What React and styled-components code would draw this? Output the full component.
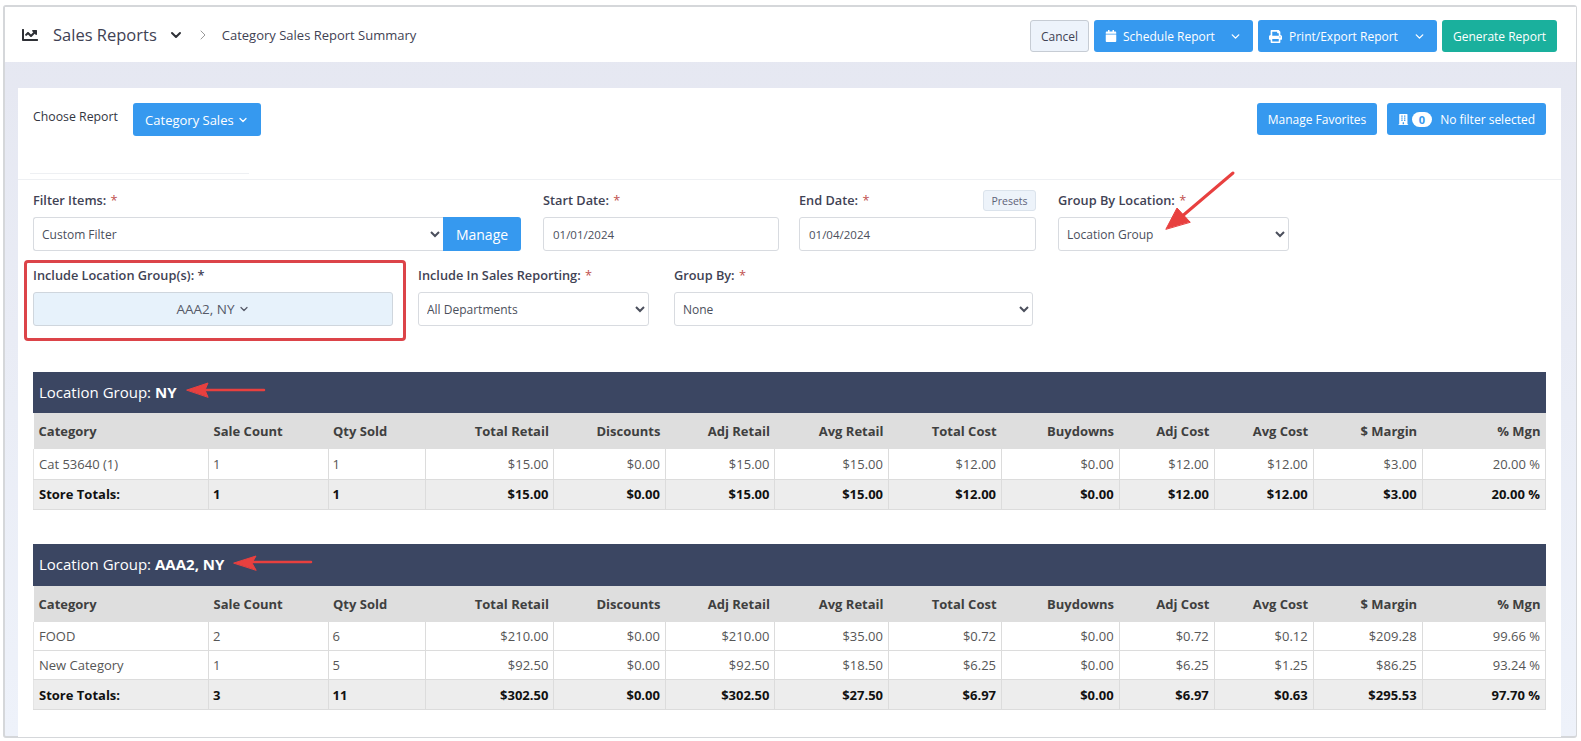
import React from "react";
import styled, { createGlobalStyle } from "styled-components";
import { FaChartLine, FaCalendar, FaPrint, FaBuilding } from "react-icons/fa";
import { ChevronDown, ChevronRight } from "lucide-react";

const GlobalStyle = createGlobalStyle`
  html, body { margin: 0; padding: 0; background: #fff; }
  body { font-family: "Open Sans", "Liberation Sans", sans-serif; color: #3f4254; overflow: hidden; }
  * { box-sizing: border-box; }
`;

const Page = styled.div`
  position: relative;
  width: 1581px;
  height: 741px;
  padding: 5px 4px 3px 3px;
`;

const Frame = styled.div`
  height: 733px;
  border: 2px solid #d5d7da;
  border-right-width: 1px;
  border-radius: 3px;
  display: flex;
  flex-direction: column;
  background: linear-gradient(#e5e7f1, #eef2fa);
`;

const Header = styled.header`
  height: 55px;
  flex: none;
  background: #fff;
  display: flex;
  align-items: center;
  justify-content: space-between;
  padding: 3px 19px 0 17px;
`;

const Crumbs = styled.div`
  display: flex;
  align-items: center;
  margin-top: -3px;
  color: #3f4254;
`;

const Title = styled.span`
  font-size: 16.5px;
  margin-left: 15px;
  margin-right: 11px;
`;

const Current = styled.span`
  font-size: 13px;
  margin-left: 11px;
`;

const Actions = styled.div`
  display: flex;
  gap: 5px;
`;

const Button = styled.button`
  height: ${(p) => p.$h || 32}px;
  width: ${(p) => p.$w}px;
  flex: none;
  border: none;
  border-radius: 3px;
  background: ${(p) => p.$bg || "#3699ef"};
  color: #fff;
  font: 400 ${(p) => p.$size || 12}px "Open Sans", sans-serif;
  display: flex;
  align-items: center;
  justify-content: ${(p) => p.$justify || "center"};
  gap: ${(p) => p.$gap ?? 6}px;
  padding: 0 ${(p) => p.$pad || 0}px;
  white-space: nowrap;
`;

const CancelButton = styled(Button)`
  background: #edf3fb;
  border: 1px solid #c6ccd4;
  color: #3f4254;
`;

const ButtonLabel = styled.span`
  flex: 1;
  text-align: left;
  margin-left: ${(p) => p.$ml || 0}px;
`;

const Main = styled.main`
  flex: 1;
  padding: 26px 15px 0 13px;
`;

const Card = styled.section`
  background: #fff;
  height: 649px;
`;

const TopBar = styled.div`
  height: 92px;
  border-bottom: 1px solid #eef0f3;
  padding: 15px 15px 0 15px;
  display: flex;
  justify-content: space-between;
  position: relative;
`;

const TopGroup = styled.div`
  display: flex;
  align-items: flex-start;
  gap: ${(p) => p.$gap}px;
`;

const ChooseLabel = styled.span`
  font-size: 12.3px;
  color: #33363f;
  margin-top: 5px;
`;

const ShortRule = styled.div`
  position: absolute;
  left: 12px;
  top: 85px;
  width: 219px;
  border-top: 1px solid #eef0f3;
`;

const Count = styled.span`
  background: #fff;
  color: #3699ef;
  border-radius: 9px;
  width: 21px;
  height: 15px;
  font-size: 11px;
  font-weight: 700;
  line-height: 15px;
  text-align: center;
  margin-left: -3px;
  margin-right: 2px;
`;

const FilterRow = styled.div`
  display: flex;
  height: ${(p) => p.$h}px;
  padding-left: 15px;
  padding-top: 6px;
`;

const Field = styled.div`
  width: ${(p) => p.$w}px;
  margin-right: ${(p) => p.$mr || 0}px;
  flex: none;
`;

const LabelRow = styled.div`
  height: 31px;
  padding-bottom: 3px;
  display: flex;
  align-items: center;
  justify-content: space-between;
`;

const Label = styled.label`
  font-size: 12.75px;
  font-weight: 600;
  color: #3f4254;
  white-space: nowrap;
  & b { color: #c0504d; font-weight: 400; margin-left: 1px; }
`;

const Presets = styled.span`
  width: 53px;
  height: 21px;
  align-self: flex-start;
  margin-top: 4px;
  border: 1px solid #dbe3ec;
  border-radius: 3px;
  background: #edf3fa;
  font-size: 10.5px;
  color: #5e6278;
  display: flex;
  align-items: center;
  justify-content: center;
`;

const inputCss = `
  width: 100%;
  height: 34px;
  border: 1px solid #d8dbe0;
  border-radius: 3px;
  background: #fff;
  font-family: "Open Sans", sans-serif;
  font-weight: 400;
  color: #4b4f5c;
`;

const Select = styled.select`
  ${inputCss}
  font-size: 12px;
  padding: 0 4px;
  ${(p) => p.$joined && "border-radius: 3px 0 0 3px; border-right: none;"}
`;

const Input = styled.input`
  ${inputCss}
  font-size: 11.5px;
  padding: 0 9px;
`;

const Joined = styled.div`
  display: flex;
`;

const ManageButton = styled(Button)`
  border-radius: 0 3px 3px 0;
`;

const MultiSelect = styled.div`
  height: 34px;
  border: 1px solid #cfd6dd;
  border-radius: 3px;
  background: #e7f2fb;
  font-size: 13.5px;
  color: #565a68;
  display: flex;
  align-items: center;
  justify-content: center;
  gap: 3px;
`;

const Report = styled.div`
  margin: ${(p) => p.$top}px 15px 0 15px;
`;

const GroupBar = styled.div`
  height: ${(p) => p.$h}px;
  background: #3b4662;
  color: #fff;
  font-size: 15px;
  display: flex;
  align-items: center;
  padding-left: 6px;
  padding-bottom: 2px;
  gap: 4px;
  & b { font-weight: 700; }
`;

const Table = styled.table`
  width: 100%;
  table-layout: fixed;
  border-collapse: collapse;
  font-size: 13px;
`;

const HeadCell = styled.th`
  height: 36px;
  background: #dedede;
  color: #3f4040;
  font-weight: 700;
  font-size: 13px;
  padding: 0 5px;
  text-align: ${(p) => (p.$left ? "left" : "right")};
`;

const Cell = styled.td`
  height: ${(p) => p.$h}px;
  padding: 0 5px 0 4px;
  border-right: 1px solid #dcdcdc;
  border-bottom: 1px solid #dcdcdc;
  color: #565656;
  font-weight: 400;
  text-align: ${(p) => (p.$left ? "left" : "right")};
  &:first-child { border-left: 1px solid #e4e4e4; padding-left: 5px; }
`;

const TotalCell = styled(Cell)`
  background: #ededed;
  color: #111;
  font-weight: 700;
`;

const Annotation = styled.svg`
  position: absolute;
  left: 0;
  top: 0;
  pointer-events: none;
`;

const HighlightBox = styled.div`
  position: absolute;
  left: 24px;
  top: 260px;
  width: 382px;
  height: 81px;
  border: 3px solid #dc4449;
  border-radius: 4px;
  pointer-events: none;
`;

const columns = [
  ["Category", 175, true],
  ["Sale Count", 119.4, true],
  ["Qty Sold", 97.6, true],
  ["Total Retail", 128.2],
  ["Discounts", 111.5],
  ["Adj Retail", 109.5],
  ["Avg Retail", 113.5],
  ["Total Cost", 113],
  ["Buydowns", 117.5],
  ["Adj Cost", 95.2],
  ["Avg Cost", 98.9],
  ["$ Margin", 108.9],
  ["% Mgn", 123.2],
];

const ny = {
  rowH: 30,
  rows: [["Cat 53640 (1)", "1", "1", "$15.00", "$0.00", "$15.00", "$15.00", "$12.00", "$0.00", "$12.00", "$12.00", "$3.00", "20.00 %"]],
  total: ["Store Totals:", "1", "1", "$15.00", "$0.00", "$15.00", "$15.00", "$12.00", "$0.00", "$12.00", "$12.00", "$3.00", "20.00 %"],
};

const aaa = {
  rowH: 29,
  rows: [
    ["FOOD", "2", "6", "$210.00", "$0.00", "$210.00", "$35.00", "$0.72", "$0.00", "$0.72", "$0.12", "$209.28", "99.66 %"],
    ["New Category", "1", "5", "$92.50", "$0.00", "$92.50", "$18.50", "$6.25", "$0.00", "$6.25", "$1.25", "$86.25", "93.24 %"],
  ],
  total: ["Store Totals:", "3", "11", "$302.50", "$0.00", "$302.50", "$27.50", "$6.97", "$0.00", "$6.97", "$0.63", "$295.53", "97.70 %"],
};

function ReportTable({ data }) {
  return (
    <Table>
      <colgroup>
        {columns.map(([name, width]) => (
          <col key={name} width={width} />
        ))}
      </colgroup>
      <thead>
        <tr>
          {columns.map(([name, , left]) => (
            <HeadCell key={name} $left={left}>{name}</HeadCell>
          ))}
        </tr>
      </thead>
      <tbody>
        {data.rows.map((row) => (
          <tr key={row[0]}>
            {row.map((value, i) => (
              <Cell key={i} $h={data.rowH} $left={i < 3}>{value}</Cell>
            ))}
          </tr>
        ))}
        <tr>
          {data.total.map((value, i) => (
            <TotalCell key={i} $h={30} $left={i < 3}>{value}</TotalCell>
          ))}
        </tr>
      </tbody>
    </Table>
  );
}

const Req = () => <b>*</b>;

export default function App() {
  return (
    <Page>
      <GlobalStyle />
      <Frame>
        <Header>
          <Crumbs>
            <FaChartLine size={16} color="#2e3036" />
            <Title>Sales Reports</Title>
            <ChevronDown size={16} strokeWidth={3} color="#2e3036" />
            <ChevronRight size={16} strokeWidth={1.5} color="#9a9a9a" style={{ marginLeft: 11 }} />
            <Current>Category Sales Report Summary</Current>
          </Crumbs>
          <Actions>
            <CancelButton $w={59}>Cancel</CancelButton>
            <Button $w={159} $pad={11} $justify="flex-start">
              <FaCalendar size={12} />
              <ButtonLabel>Schedule Report</ButtonLabel>
              <ChevronDown size={13} strokeWidth={2.5} />
            </Button>
            <Button $w={179} $pad={11} $justify="flex-start">
              <FaPrint size={13} />
              <ButtonLabel $ml={1}>Print/Export Report</ButtonLabel>
              <ChevronDown size={13} strokeWidth={2.5} />
            </Button>
            <Button $w={115} $bg="#1ab09d">Generate Report</Button>
          </Actions>
        </Header>
        <Main>
          <Card>
            <TopBar>
              <TopGroup $gap={15}>
                <ChooseLabel>Choose Report</ChooseLabel>
                <Button $w={128} $h={33} $size={13} $gap={3}>
                  Category Sales
                  <ChevronDown size={12} strokeWidth={2.5} />
                </Button>
              </TopGroup>
              <TopGroup $gap={10}>
                <Button $w={120}>Manage Favorites</Button>
                <Button $w={159} $pad={11} $justify="flex-start">
                  <FaBuilding size={11} />
                  <Count>0</Count>
                  No filter selected
                </Button>
              </TopGroup>
              <ShortRule />
            </TopBar>

            <FilterRow $h={75}>
              <Field $w={488} $mr={22}>
                <LabelRow><Label>Filter Items: <Req /></Label></LabelRow>
                <Joined>
                  <Select $joined defaultValue="Custom Filter"><option>Custom Filter</option></Select>
                  <ManageButton $w={78} $h={34} $size={14}>Manage</ManageButton>
                </Joined>
              </Field>
              <Field $w={236} $mr={20}>
                <LabelRow><Label>Start Date: <Req /></Label></LabelRow>
                <Input defaultValue="01/01/2024" />
              </Field>
              <Field $w={237} $mr={22}>
                <LabelRow>
                  <Label>End Date: <Req /></Label>
                  <Presets>Presets</Presets>
                </LabelRow>
                <Input defaultValue="01/04/2024" />
              </Field>
              <Field $w={231}>
                <LabelRow><Label>Group By Location: <Req /></Label></LabelRow>
                <Select defaultValue="Location Group"><option>Location Group</option></Select>
              </Field>
            </FilterRow>
            <FilterRow $h={117}>
              <Field $w={360} $mr={25}>
                <LabelRow><Label>Include Location Group(s): *</Label></LabelRow>
                <MultiSelect>AAA2, NY <ChevronDown size={12} strokeWidth={2.5} /></MultiSelect>
              </Field>
              <Field $w={231} $mr={25}>
                <LabelRow><Label>Include In Sales Reporting: <Req /></Label></LabelRow>
                <Select defaultValue="All Departments"><option>All Departments</option></Select>
              </Field>
              <Field $w={359}>
                <LabelRow><Label>Group By: <Req /></Label></LabelRow>
                <Select defaultValue="None"><option>None</option></Select>
              </Field>
            </FilterRow>

            <Report $top={0}>
              <GroupBar $h={41}>Location Group: <b>NY</b></GroupBar>
              <ReportTable data={ny} />
            </Report>
            <Report $top={34}>
              <GroupBar $h={42}>Location Group: <b>AAA2, NY</b></GroupBar>
              <ReportTable data={aaa} />
            </Report>
          </Card>
        </Main>
      </Frame>

      <HighlightBox />
      <Annotation width="1581" height="741" viewBox="0 0 1581 741">
        <g fill="#e8403f" stroke="#e8403f" strokeLinecap="round">
          <line x1="1233" y1="173" x2="1180" y2="218" strokeWidth="3" />
          <polygon points="1166,229 1177,208 1190,222" strokeWidth="1" />
          <line x1="264" y1="390" x2="200" y2="390" strokeWidth="2.5" />
          <polygon points="187,390 208,383 205,390 208,397" strokeWidth="1" />
          <line x1="311" y1="562" x2="250" y2="562" strokeWidth="2.5" />
          <polygon points="234,563 256,556 252,563 256,570" strokeWidth="1" />
        </g>
      </Annotation>
    </Page>
  );
}
